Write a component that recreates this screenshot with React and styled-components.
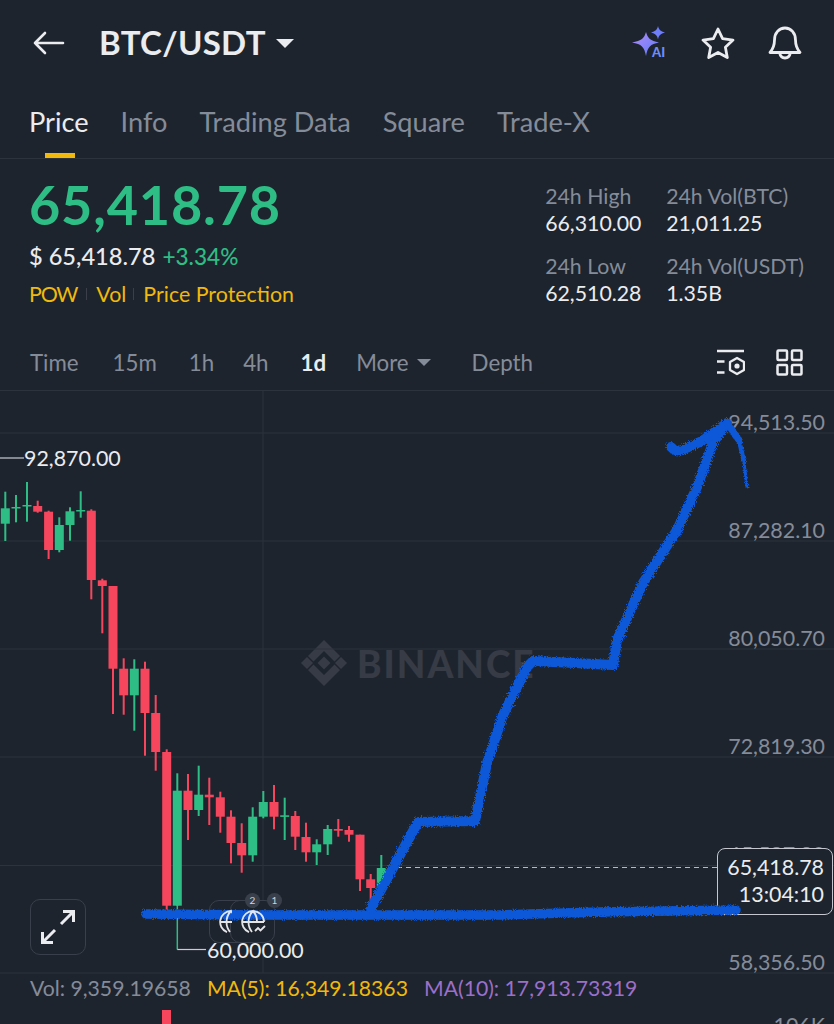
import React from 'react';
import styled, { createGlobalStyle } from 'styled-components';

const bg = '#1e242e';
const grey = '#858c99';
const line = '#2d333d';
const green = '#2ebd85';
const red = '#f6465d';
const yellow = '#f0b90b';
const font = 'Lato, "Open Sans", sans-serif';

const GlobalStyle = createGlobalStyle`
  html, body { margin: 0; padding: 0; background: ${bg}; }
`;

// x, wick top, wick bottom, body top, body bottom, up?
const candles = [
  [5.3, 491.7, 541, 508.3, 523.7, 1],
  [16, 495, 522.3, 507, 508.5, 1],
  [27, 482, 521.7, 505, 506.5, 1],
  [37.7, 500.7, 512.7, 506, 511.7, 0],
  [48.6, 510.7, 559, 511.7, 550, 0],
  [59.3, 517.3, 552.3, 525, 550, 1],
  [70, 507.3, 540.7, 511.3, 525, 1],
  [80.7, 491.3, 517.7, 510, 511.5, 1],
  [91.3, 509.3, 599.3, 510.7, 580, 0],
  [102.3, 578.7, 633.3, 580.3, 586, 0],
  [113, 586, 714, 586, 668.7, 0],
  [123.7, 658.3, 714.7, 668.7, 695.3, 0],
  [134.3, 659.3, 730.7, 668.7, 695.3, 1],
  [145, 661.7, 755.7, 668.7, 713, 0],
  [155.7, 695, 770.7, 713, 752, 0],
  [166.7, 749.3, 910, 752, 905.7, 0],
  [177.3, 773.3, 906, 790.7, 905.7, 1],
  [188, 774, 840, 790.7, 810, 0],
  [198.7, 765.7, 816, 794.7, 810, 1],
  [209.3, 777.7, 825, 794.7, 797.3, 0],
  [220.3, 791.7, 832.7, 797.3, 816.7, 0],
  [231, 810.3, 863.3, 816.7, 843, 0],
  [241.7, 823.3, 872.7, 843, 855.3, 0],
  [252.7, 807.3, 861.7, 816.7, 855.3, 1],
  [263.3, 791, 818.3, 802, 816.7, 1],
  [274, 785, 829.3, 802, 816.7, 0],
  [284.7, 797.7, 840, 815.3, 816.9, 1],
  [295.3, 811, 850, 816, 836.7, 0],
  [306, 822.7, 861.7, 837, 852.3, 0],
  [316.7, 839.3, 865, 844.3, 852.3, 1],
  [327.7, 825, 855, 829, 844.3, 1],
  [338.3, 819, 836.7, 829, 830.7, 0],
  [349, 826, 841.7, 830, 834.7, 0],
  [360, 834.7, 891, 834.7, 879.3, 0],
  [370.7, 874, 911.7, 879.3, 888, 0],
  [381.3, 855, 888, 868, 888, 1],
];

const gridRows = [433, 541, 649, 757, 865.5, 973];
const axisPrices = [
  ['94,513.50', 408],
  ['87,282.10', 516],
  ['80,050.70', 624],
  ['72,819.30', 732],
  ['65,587.90', 840],
  ['58,356.50', 948],
  ['106K', 1011],
];

const Page = styled.div`
  width: 834px;
  height: 1024px;
  overflow: hidden;
  background: ${bg};
  font-family: ${font};
  display: flex;
  flex-direction: column;
`;

const Header = styled.header`
  height: 86px;
  flex: none;
  display: flex;
  align-items: center;
  padding: 0 32px 0 33px;
  svg { display: block; }
`;

const Title = styled.h1`
  margin: 0 0 2px 34px;
  font-size: 33px;
  font-weight: 700;
  letter-spacing: 0.3px;
  color: #eaecef;
`;

const Caret = styled.span`
  width: 0;
  height: 0;
  margin-left: ${p => p.$gap || 10}px;
  border-left: ${p => p.$size}px solid transparent;
  border-right: ${p => p.$size}px solid transparent;
  border-top: ${p => p.$size}px solid ${p => p.$color};
`;

const HeaderIcons = styled.div`
  margin-left: auto;
  display: flex;
  align-items: center;
  gap: 33px;
`;

const Tabs = styled.nav`
  height: 73px;
  flex: none;
  box-sizing: border-box;
  display: flex;
  align-items: flex-start;
  gap: 32px;
  padding: 18px 29px 0;
  border-bottom: 1px solid ${line};
`;

const Tab = styled.span`
  position: relative;
  height: 54px;
  font-size: 27.2px;
  line-height: 36px;
  color: ${p => (p.$active ? '#eaecef' : grey)};
  &::after {
    content: '';
    display: ${p => (p.$active ? 'block' : 'none')};
    position: absolute;
    left: 16px;
    top: 49px;
    width: 30px;
    height: 5px;
    background: ${yellow};
  }
`;

const Summary = styled.section`
  height: 181px;
  flex: none;
  box-sizing: border-box;
  display: flex;
  justify-content: space-between;
  padding: 16px 30px 0;
`;

const PriceColumn = styled.div`
  display: flex;
  flex-direction: column;
`;

const BigPrice = styled.div`
  font-size: 54px;
  line-height: 60px;
  font-weight: 700;
  letter-spacing: 0.8px;
  margin-left: -1px;
  color: ${green};
`;

const FiatRow = styled.div`
  margin: 6px 0 0 -1px;
  display: flex;
  align-items: baseline;
  gap: 7px;
  font-size: 23.6px;
  line-height: 30px;
  font-weight: 500;
  color: #eaecef;
  b { font-size: 22.6px; font-weight: 500; color: ${green}; }
`;

const TagRow = styled.div`
  margin: 7px 0 0 -1px;
  display: flex;
  align-items: center;
  gap: 9px;
  font-size: 21.4px;
  line-height: 30px;
  color: ${yellow};
  i { width: 1px; height: 12px; background: #3a3f4a; }
  span:first-child { letter-spacing: -1.2px; }
  span:nth-of-type(2) { margin-right: -2px; }
`;

const Stats = styled.div`
  display: grid;
  grid-template-columns: 121px auto;
  grid-auto-rows: 70px;
  padding-top: 8px;
`;

const StatLabel = styled.div`
  font-size: 21.3px;
  line-height: 27px;
  color: ${grey};
`;

const StatValue = styled.div`
  font-size: 21.3px;
  line-height: 27px;
  color: #eaecef;
`;

const StatCell = styled.div`
  white-space: nowrap;
`;

const Intervals = styled.div`
  height: 51px;
  flex: none;
  box-sizing: border-box;
  display: flex;
  align-items: center;
  padding: 0 31px 5px 30px;
  border-bottom: 1px solid ${line};
  font-size: 22.3px;
  color: ${grey};
`;

const Interval = styled.span`
  margin-right: ${p => p.$gap}px;
  display: flex;
  align-items: center;
  color: ${p => (p.$active ? '#eaecef' : grey)};
  font-weight: ${p => (p.$active ? 700 : 400)};
`;

const IntervalIcons = styled.div`
  margin-left: auto;
  display: flex;
  gap: 31px;
  svg { display: block; }
`;

const Chart = styled.div`
  position: relative;
  flex: 1;
`;

const Layer = styled.svg`
  position: absolute;
  left: 0;
  top: 0;
`;

const Watermark = styled.div`
  position: absolute;
  left: 301px;
  top: 249px;
  display: flex;
  align-items: center;
  gap: 10px;
  font-size: 37px;
  font-weight: 900;
  letter-spacing: 2px;
  color: #363b45;
`;

const AxisPrice = styled.span`
  position: absolute;
  right: 9px;
  top: ${p => p.$y - 391}px;
  font-size: 21.4px;
  line-height: 28px;
  color: ${grey};
`;

const PriceNote = styled.span`
  position: absolute;
  left: ${p => p.$x}px;
  top: ${p => p.$y - 391}px;
  font-size: 21.4px;
  line-height: 28px;
  color: #eaecef;
`;

const LastPrice = styled.div`
  position: absolute;
  left: 717px;
  top: 457px;
  width: 116px;
  height: 67px;
  box-sizing: border-box;
  padding: 5px 8px 0 0;
  border: 1.5px solid #c4c8ce;
  border-radius: 8px;
  background: ${bg};
  text-align: right;
  font-size: 21.4px;
  line-height: 27px;
  color: #eaecef;
`;

const ExpandButton = styled.div`
  position: absolute;
  left: 30px;
  top: 508px;
  width: 56px;
  height: 56px;
  box-sizing: border-box;
  border: 1.5px solid #3a404b;
  border-radius: 10px;
  display: flex;
  align-items: center;
  justify-content: center;
`;

const AlertButton = styled.div`
  position: absolute;
  left: ${p => p.$x}px;
  top: 509px;
  width: 45px;
  height: 43px;
  box-sizing: border-box;
  border: 1.5px solid #3a404b;
  border-radius: 10px;
  background: ${bg};
`;

// the globes stay readable through the drawn line, so they sit above it
const AlertGlyph = styled.div`
  position: absolute;
  left: ${p => p.$x}px;
  top: 518px;
  width: ${p => p.$width}px;
  height: 26px;
  overflow: hidden;
  opacity: 0.92;
`;

const Badge = styled.span`
  position: absolute;
  left: ${p => p.$x}px;
  top: 502px;
  width: 15px;
  height: 15px;
  border-radius: 50%;
  background: #3a404b;
  color: #cfd3d9;
  font-size: 10px;
  line-height: 15px;
  text-align: center;
`;

const VolumeRow = styled.div`
  position: absolute;
  left: 30px;
  top: 583px;
  display: flex;
  gap: 16px;
  font-size: 21.2px;
  line-height: 28px;
  white-space: nowrap;
`;

const Reading = styled.span`
  color: ${p => p.$color};
`;

const BackIcon = () => (
  <svg width="32" height="24" viewBox="0 0 32 24" fill="none" stroke="#eaecef" strokeWidth="2.6" strokeLinecap="round" strokeLinejoin="round">
    <path d="M30 12H2M12 2 2 12l10 10" />
  </svg>
);

const AiIcon = () => (
  <svg width="36" height="34" viewBox="0 0 36 34">
    <defs>
      <linearGradient id="spark" x1="0" y1="0" x2="1" y2="1">
        <stop offset="0" stopColor="#b48cf5" />
        <stop offset="1" stopColor="#5c7cfa" />
      </linearGradient>
    </defs>
    <path d="M14 9c1.6 6 4.4 9 13 10.500-8.600 1.500-11.400 4.500-13 13.500C12.400 24 9.600 21 0 19.500 9.600 18 12.400 15 14 9Z" fill="url(#spark)" transform="translate(0 -3)" />
    <path d="M26 0c.8 3.600 2.400 5.300 7 6.500-4.600 1.200-6.200 2.900-7 7-.8-4.100-2.400-5.800-7-7 4.600-1.200 6.200-2.900 7-6.500Z" fill="#6f7ffb" />
    <text x="20" y="31" fontFamily="Lato, sans-serif" fontWeight="900" fontSize="13" fill="#6d8dfb">AI</text>
  </svg>
);

const StarIcon = () => (
  <svg width="34" height="32" viewBox="0 0 34 32" fill="none" stroke="#eaecef" strokeWidth="2.800" strokeLinejoin="round">
    <path d="m17 2 4.600 9.700 10.400 1.400-7.600 7.200 1.900 10.300L17 25.500l-9.300 5.100 1.900-10.300L2 13.100l10.400-1.400L17 2Z" />
  </svg>
);

const BellIcon = () => (
  <svg width="34" height="34" viewBox="0 0 34 34" fill="none" stroke="#eaecef" strokeWidth="2.800" strokeLinejoin="round" strokeLinecap="round">
    <path d="M6.500 14c0-7 4.500-12 10.500-12s10.500 5 10.500 12c0 6 1.500 9 4.500 12.500H2C5 23 6.500 20 6.500 14Z" />
    <path d="M11.500 26.500c.7 3.500 2.800 5.500 5.500 5.500s4.800-2 5.500-5.500" />
  </svg>
);

const DisplayIcon = () => (
  <svg width="28" height="27" viewBox="0 0 28 27" fill="none" stroke="#eaecef" strokeWidth="2.300">
    <path d="M0 2h27M0 12.500h7.500M0 23.500h7.500" />
    <path d="m20 9 7 4v8l-7 4-7-4v-8l7-4Z" strokeLinejoin="round" />
    <circle cx="20" cy="17" r="2.600" fill="#eaecef" stroke="none" />
  </svg>
);

const GridIcon = () => (
  <svg width="27" height="27" viewBox="0 0 27 27" fill="none" stroke="#eaecef" strokeWidth="2.500">
    <rect x="1.500" y="1.500" width="9.500" height="9.500" rx="1" />
    <rect x="16" y="1.500" width="9.500" height="9.500" rx="1" />
    <rect x="1.500" y="16" width="9.500" height="9.500" rx="1" />
    <rect x="16" y="16" width="9.500" height="9.500" rx="1" />
  </svg>
);

const ExpandIcon = () => (
  <svg width="38" height="38" viewBox="0 0 38 38" fill="none" stroke="#eaecef" strokeWidth="3">
    <path d="M22 16 34 4M24 3.500h10.500V14M16 22 4 34M3.500 24v10.500H14" />
  </svg>
);

const GlobeIcon = () => (
  <svg width="26" height="26" viewBox="0 0 26 26" fill="none" stroke="#f4f5f7" strokeWidth="1.800">
    <path d="M13 2a11 11 0 0 0-4 21.200M13 2a11 11 0 0 1 11 11M13 2c-3 3-4.500 7-4.500 11s1.500 7.500 3.500 10M13 2c3 3 4 7 4 11M2 13h22" />
    <path d="m15 22 3-3 2.500 2.500L25 17" />
  </svg>
);

const BinanceMark = () => (
  <svg width="46" height="46" viewBox="301 640 46 46" fill="#363b45">
    <path d="M324 640l16 16-5.500 5.500L324 651l-10.500 10.500L308 656z" />
    <path d="M324 686l16-16-5.500-5.500L324 675l-10.500-10.500L308 670z" />
    <path d="M324 656.500l6.500 6.500-6.500 6.500-6.500-6.500z" />
    <path d="M307 657l6 6-6 6-6-6z" />
    <path d="M341 657l6 6-6 6-6-6z" />
  </svg>
);

const CandleLayer = () => (
  <Layer width="834" height="633" viewBox="0 391 834 633">
    {gridRows.map(y => (
      <line key={y} x1="0" x2="834" y1={y} y2={y} stroke={line} />
    ))}
    <line x1="263" x2="263" y1="391" y2="973" stroke={line} />
    <path d="M0 458H24" stroke="#c9ccd1" strokeWidth="1.200" fill="none" />
    <path d="M177.300 905V949.500" stroke={green} strokeWidth="1.500" fill="none" />
    <path d="M177.300 949.500H206" stroke="#c9ccd1" strokeWidth="1.200" fill="none" />
    <path d="M388 867.500H718" stroke="#b5b9c0" strokeWidth="1.200" strokeDasharray="5 4" fill="none" />
    {candles.map(([x, top, bottom, open, close, up]) => (
      <g key={x} fill={up ? green : red}>
        <rect x={x - 1} y={top} width="2" height={bottom - top} />
        <rect x={x - 4.500} y={open} width="9" height={close - open} />
      </g>
    ))}
    <rect x="162" y="1010" width="9" height="14" fill={red} />
  </Layer>
);

const Scribble = () => (
  <Layer width="834" height="633" viewBox="0 391 834 633">
    <defs>
      <filter id="rough" x="-5%" y="-5%" width="110%" height="110%">
        <feTurbulence type="fractalNoise" baseFrequency="0.9" numOctaves="2" seed="4" />
        <feDisplacementMap in="SourceGraphic" scale="5" />
      </filter>
    </defs>
    <g filter="url(#rough)" fill="none" stroke="#0a58d8" strokeLinecap="round" strokeLinejoin="round">
      <path strokeWidth="9.500" d="M146 914 L260 915 L370 915 L500 915 L600 912 L736 910" />
      <path strokeWidth="10" d="M371 908 L418 822 L475 821 L487 763 L503 715 L527 667 L533 661 L575 663 L613 665 L617 640 L643 583 L677 530 L697 487 L713 443 L726 424" />
      <path strokeWidth="10" d="M671 447 Q675 452 682 450 L702 441 L727 423" />
      <path strokeWidth="7" d="M727 423 L739 440" />
      <path strokeWidth="4.500" d="M739 440 L744 462" />
      <path strokeWidth="3" d="M744 462 L747 487" />
    </g>
  </Layer>
);

const App = () => (
  <Page>
    <GlobalStyle />
    <Header>
      <BackIcon />
      <Title>BTC/USDT</Title>
      <Caret $size={9} $color="#eaecef" />
      <HeaderIcons>
        <AiIcon />
        <StarIcon />
        <BellIcon />
      </HeaderIcons>
    </Header>
    <Tabs>
      <Tab $active>Price</Tab>
      <Tab>Info</Tab>
      <Tab>Trading Data</Tab>
      <Tab>Square</Tab>
      <Tab>Trade-X</Tab>
    </Tabs>
    <Summary>
      <PriceColumn>
        <BigPrice>65,418.78</BigPrice>
        <FiatRow>
          <span>$ 65,418.78</span>
          <b>+3.34%</b>
        </FiatRow>
        <TagRow>
          <span>POW</span>
          <i />
          <span>Vol</span>
          <i />
          <span>Price Protection</span>
        </TagRow>
      </PriceColumn>
      <Stats>
        <StatCell>
          <StatLabel>24h High</StatLabel>
          <StatValue>66,310.00</StatValue>
        </StatCell>
        <StatCell>
          <StatLabel>24h Vol(BTC)</StatLabel>
          <StatValue>21,011.25</StatValue>
        </StatCell>
        <StatCell>
          <StatLabel>24h Low</StatLabel>
          <StatValue>62,510.28</StatValue>
        </StatCell>
        <StatCell>
          <StatLabel>24h Vol(USDT)</StatLabel>
          <StatValue>1.35B</StatValue>
        </StatCell>
      </Stats>
    </Summary>
    <Intervals>
      <Interval $gap={34}>Time</Interval>
      <Interval $gap={32}>15m</Interval>
      <Interval $gap={29}>1h</Interval>
      <Interval $gap={32}>4h</Interval>
      <Interval $gap={30} $active>1d</Interval>
      <Interval $gap={41}>
        More
        <Caret $size={7} $color={grey} $gap={8} />
      </Interval>
      <Interval $gap={0}>Depth</Interval>
      <IntervalIcons>
        <DisplayIcon />
        <GridIcon />
      </IntervalIcons>
    </Intervals>
    <Chart>
      <Watermark>
        <BinanceMark />
        BINANCE
      </Watermark>
      <CandleLayer />
      {axisPrices.map(([label, y]) => (
        <AxisPrice key={label} $y={y}>{label}</AxisPrice>
      ))}
      <PriceNote $x={24} $y={444}>92,870.00</PriceNote>
      <PriceNote $x={207} $y={936}>60,000.00</PriceNote>
      <LastPrice>
        65,418.78
        <br />
        13:04:10
      </LastPrice>
      <ExpandButton>
        <ExpandIcon />
      </ExpandButton>
      <AlertButton $x={209} />
      <AlertButton $x={230} />
      <Badge $x={245}>2</Badge>
      <Badge $x={267}>1</Badge>
      <VolumeRow>
        <Reading $color={grey}>Vol: 9,359.19658</Reading>
        <Reading $color={yellow}>MA(5): 16,349.18363</Reading>
        <Reading $color="#9c6fc9">MA(10): 17,913.73319</Reading>
      </VolumeRow>
      <Scribble />
      <AlertGlyph $x={218} $width={14}><GlobeIcon /></AlertGlyph>
      <AlertGlyph $x={240} $width={26}><GlobeIcon /></AlertGlyph>
    </Chart>
  </Page>
);

export default App;
